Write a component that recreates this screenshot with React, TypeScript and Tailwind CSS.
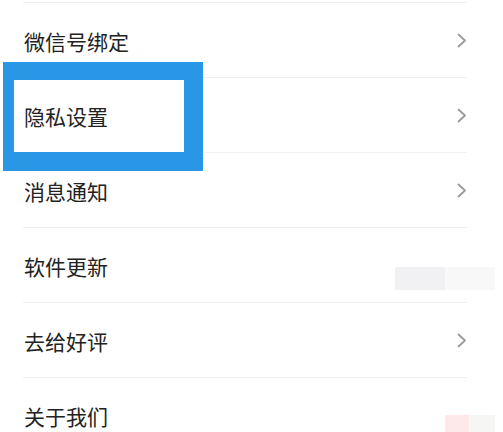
const rows = [
  { label: "微信号绑定", arrow: true },
  { label: "隐私设置", arrow: true },
  { label: "消息通知", arrow: true },
  { label: "软件更新", arrow: false },
  { label: "去给好评", arrow: true },
  { label: "关于我们", arrow: false },
];

function Chevron() {
  return (
    <svg width="10" height="15" viewBox="0 0 10 15" fill="none" className="shrink-0">
      <path d="M1.5 1.5 L8 7.5 L1.5 13.5" stroke="#9a9a9a" strokeWidth="1.8" strokeLinecap="round" strokeLinejoin="round" />
    </svg>
  );
}

export default function App() {
  return (
    <div
      className="relative h-[432px] w-[503px] overflow-hidden bg-white"
      style={{ fontFamily: '"Noto Sans CJK SC", "Noto Sans", sans-serif' }}
    >
      {/* Settings list */}
      <div className="ml-[23px] mr-[36px] pt-[2px]">
        {rows.map((row) => (
          <div
            key={row.label}
            className="flex h-[75px] items-center justify-between border-t border-[#f1f1f1] pl-px pt-px"
          >
            <span className="pt-[2px] text-[21px] leading-none text-[#222222]">{row.label}</span>
            {row.arrow && <Chevron />}
          </div>
        ))}
      </div>

      {/* Annotation highlight */}
      <div className="absolute left-[3px] top-[62px] h-[109px] w-[200px] border-b-[19px] border-l-[11px] border-r-[19px] border-t-[18px] border-[#2a97e6]" />

      {/* Screenshot smudges */}
      <div className="absolute left-[395px] top-[267px] flex h-[23px] w-[100px]">
        <div className="h-full w-[50px] bg-[#f1f1f3]" />
        <div className="h-full w-[50px] bg-[#f8f8f8]" />
      </div>
      <div className="absolute left-[445px] top-[415px] flex h-[17px] w-[50px]">
        <div className="h-full w-[24px] bg-[#fde9ea]" />
        <div className="h-full w-[26px] bg-[#f6f6f4]" />
      </div>
    </div>
  );
}
